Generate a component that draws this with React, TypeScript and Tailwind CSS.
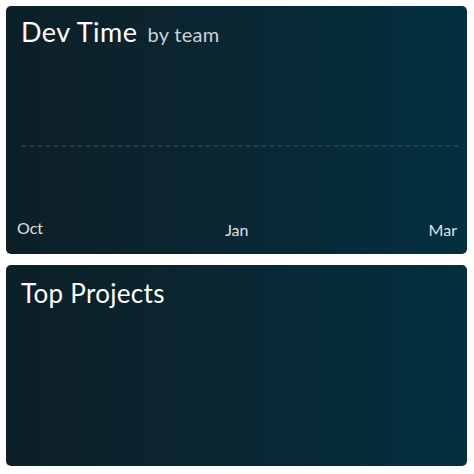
export default function App() {
  return (
    <div
      className="flex flex-col gap-[11px] bg-white pt-[6px] pr-[7px] pb-[8px] pl-[6px] w-[474px] h-[474px]"
      style={{ fontFamily: "Lato, 'Noto Sans', sans-serif" }}
    >
      {/* Dev Time card */}
      <div className="flex flex-col bg-gradient-to-r from-[#0d1f27] to-[#032f3f] rounded-[5px] h-[248px] text-white">
        <div className="flex items-baseline gap-[10px] pt-[10px] pl-[15px]">
          <span className="text-[27px] leading-[32px] tracking-[0.5px]">Dev Time</span>
          <span className="text-[#c9d3d8] text-[20px] tracking-[0.3px]">by team</span>
        </div>
        <div className="relative flex-1">
          <svg className="top-[96px] left-[15px] absolute" width="440" height="2">
            <line
              x1="0"
              y1="1"
              x2="440"
              y2="1"
              stroke="#3b5560"
              strokeWidth="1"
              strokeDasharray="5 3"
            />
          </svg>
        </div>
        <div className="flex justify-between items-end pr-[10px] pb-[12px] pl-[11px] text-[#dbe3e6] text-[16px]">
          <span className="mb-[2px]">Oct</span>
          <span className="pl-[2px]">Jan</span>
          <span>Mar</span>
        </div>
      </div>

      {/* Top Projects card */}
      <div className="flex-1 bg-gradient-to-r from-[#0d1f27] to-[#032f3f] rounded-[5px] text-white">
        <div className="pt-[12px] pl-[15px] text-[26px] leading-[32px] tracking-[0.3px]">Top Projects</div>
      </div>
    </div>
  );
}
